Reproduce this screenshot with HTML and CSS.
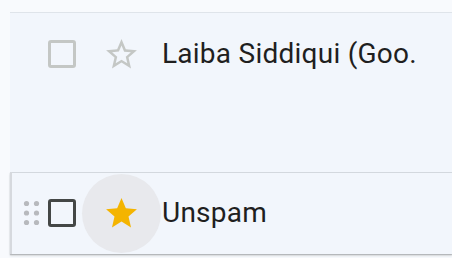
FILE: index.html
```html
<!DOCTYPE html>
<html>
<head>
<meta charset="utf-8">
<link rel="stylesheet" href="styles.css">
</head>
<body>
<div class="list">
  <div class="row row-read">
    <div class="handle"></div>
    <div class="check check-faded"></div>
    <div class="star-cell">
      <svg class="star" viewBox="0 0 24 24"><path fill="#c4c7c5" d="M22 9.24l-7.19-.62L12 2 9.19 8.63 2 9.24l5.46 4.73L5.82 21 12 17.27 18.18 21l-1.63-7.03L22 9.24zM12 15.4l-3.76 2.27 1-4.28-3.32-2.88 4.38-.38L12 6.1l1.71 4.04 4.38.38-3.32 2.88 1 4.28L12 15.4z"/></svg>
    </div>
    <div class="label">Laiba Siddiqui (Goo.</div>
  </div>
  <div class="spacer"></div>
  <div class="row row-hover">
    <div class="handle">
      <svg class="dots" viewBox="0 0 18 26"><g fill="#b7b9bd"><circle cx="3.5" cy="3.5" r="2.6"/><circle cx="13.5" cy="3.5" r="2.6"/><circle cx="3.5" cy="13" r="2.6"/><circle cx="13.5" cy="13" r="2.6"/><circle cx="3.5" cy="22.5" r="2.6"/><circle cx="13.5" cy="22.5" r="2.6"/></g></svg>
    </div>
    <div class="check"></div>
    <div class="star-cell star-hover">
      <svg class="star" viewBox="0 0 24 24"><path fill="#f4b400" d="M12 17.27L18.18 21l-1.64-7.03L22 9.24l-7.19-.61L12 2 9.19 8.63 2 9.24l5.46 4.73L5.82 21z"/></svg>
    </div>
    <div class="label">Unspam</div>
  </div>
</div>
</body>
</html>
```

FILE: styles.css
```css
html, body {
  margin: 0;
  padding: 0;
}
body {
  background: #f8fafd;
  font-family: Roboto, "Liberation Sans", sans-serif;
  color: #1f1f1f;
  width: 452px;
  height: 258px;
  overflow: hidden;
}
.list {
  margin: 12px 0 0 10px;
  border-top: 1px solid #dfe4ea;
  background: #f2f6fc;
}
.row {
  display: flex;
  align-items: center;
  height: 82px;
  box-sizing: border-box;
}
.spacer {
  height: 77px;
}
.row-hover {
  position: relative;
  background: #f2f6fc;
  box-shadow: inset 2px 0 0 #d6d9de, inset 0 1px 0 #d3d8de, 0 1px 1px rgba(60, 64, 67, 0.25), 0 2px 2px rgba(60, 64, 67, 0.15);
  height: 82px;
}
.handle {
  width: 38px;
  height: 28px;
  display: flex;
  align-items: center;
  padding-left: 13px;
  box-sizing: border-box;
}
.dots {
  width: 18px;
  height: 26px;
  display: block;
}
.check {
  width: 28px;
  height: 28px;
  box-sizing: border-box;
  border: 3px solid #444746;
  border-radius: 3px;
  flex: none;
}
.check-faded {
  border-color: #c4c7c5;
}
.star-cell {
  width: 79px;
  height: 79px;
  margin-left: 6px;
  border-radius: 50%;
  display: flex;
  align-items: center;
  justify-content: center;
  flex: none;
}
.star-hover {
  background: #e8e9ed;
}
.star {
  width: 37px;
  height: 37px;
  display: block;
}
.label {
  margin-left: 1px;
  font-size: 28px;
  line-height: 32px;
  letter-spacing: 0.25px;
  white-space: nowrap;
}
```
